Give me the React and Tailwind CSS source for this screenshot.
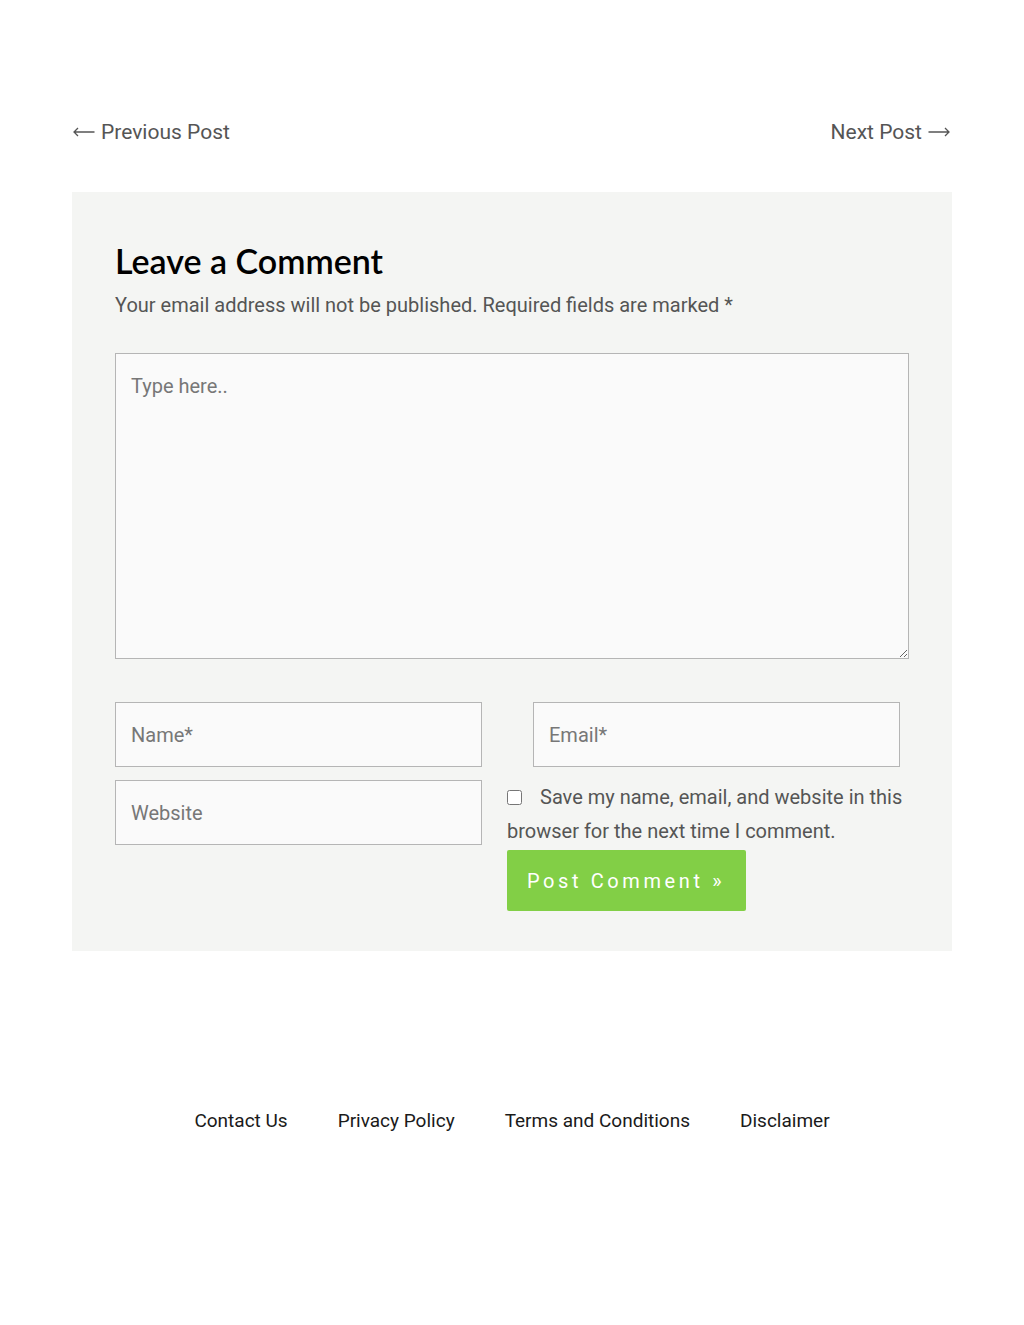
import React from 'react';

const links = ['Contact Us', 'Privacy Policy', 'Terms and Conditions', 'Disclaimer'];

const fieldCls =
  'h-[65px] border border-[#b5b5b5] bg-[#fafafa] px-[15px] text-[20px] text-[#666] placeholder:text-[#777] outline-none';

const Arrow = ({ flip }) => (
  <svg width="22" height="10" viewBox="0 0 22 10" className={flip ? 'rotate-180' : ''} fill="none" stroke="currentColor" strokeWidth="1.3">
    <path d="M21.5 5H1M5 1L1 5l4 4" />
  </svg>
);

const App = () => {
  return (
    <div className="min-h-[1325px] bg-white font-['Roboto',sans-serif]">
      <div className="mx-auto w-[880px] pt-[117px]">
        <div className="flex justify-between text-[21px] leading-[30px] text-[#555]">
          <a href="#" className="flex items-center gap-[6px] pl-px">
            <Arrow /> Previous Post
          </a>
          <a href="#" className="flex items-center gap-[6px] pr-[2px]">
            Next Post <Arrow flip />
          </a>
        </div>

        <div className="mt-[45px] bg-[#f4f5f3] px-[43px] pt-[49px] pb-[40px]">
          <h3 className="font-['Lato',sans-serif] text-[34px] font-semibold leading-[40px] text-black">
            Leave a Comment
          </h3>
          <p className="mt-[10px] text-[20px] leading-[29px] text-[#555]">
            Your email address will not be published. Required fields are marked *
          </p>

          {/* comment box */}
          <textarea
            placeholder="Type here.."
            className="mt-[33px] block h-[306px] w-full resize-y border border-[#b5b5b5] bg-[#fafafa] px-[15px] pt-[19px] pb-[18px] text-[20px] leading-[27px] text-[#666] placeholder:text-[#777] outline-none"
          />

          <div className="mt-[43px] flex">
            <input placeholder="Name*" className={`${fieldCls} w-[367px]`} />
            <input placeholder="Email*" className={`${fieldCls} ml-[51px] w-[367px]`} />
          </div>

          <div className="mt-[13px] flex items-start">
            <input placeholder="Website" className={`${fieldCls} w-[367px]`} />
            <div className="ml-[25px] flex-1">
              <p className="text-[20px] leading-[34px] text-[#555]">
                <input type="checkbox" className="mr-[18px] h-[15px] w-[15px] align-[-1px]" />
                Save my name, email, and website in this browser for the next time I comment.
              </p>
              <button className="mt-[2px] h-[61px] rounded-[2px] bg-[#82cf46] pl-[20px] pr-[21px] text-[20px] tracking-[3.6px] text-white">
                Post Comment »
              </button>
            </div>
          </div>
        </div>

        <div className="mt-[156px] flex justify-center gap-[50px] text-[19px] leading-[27px] text-[#1a1a1a]">
          {links.map(l => (
            <a key={l} href="#">{l}</a>
          ))}
        </div>
      </div>
    </div>
  );
};

export default App;
